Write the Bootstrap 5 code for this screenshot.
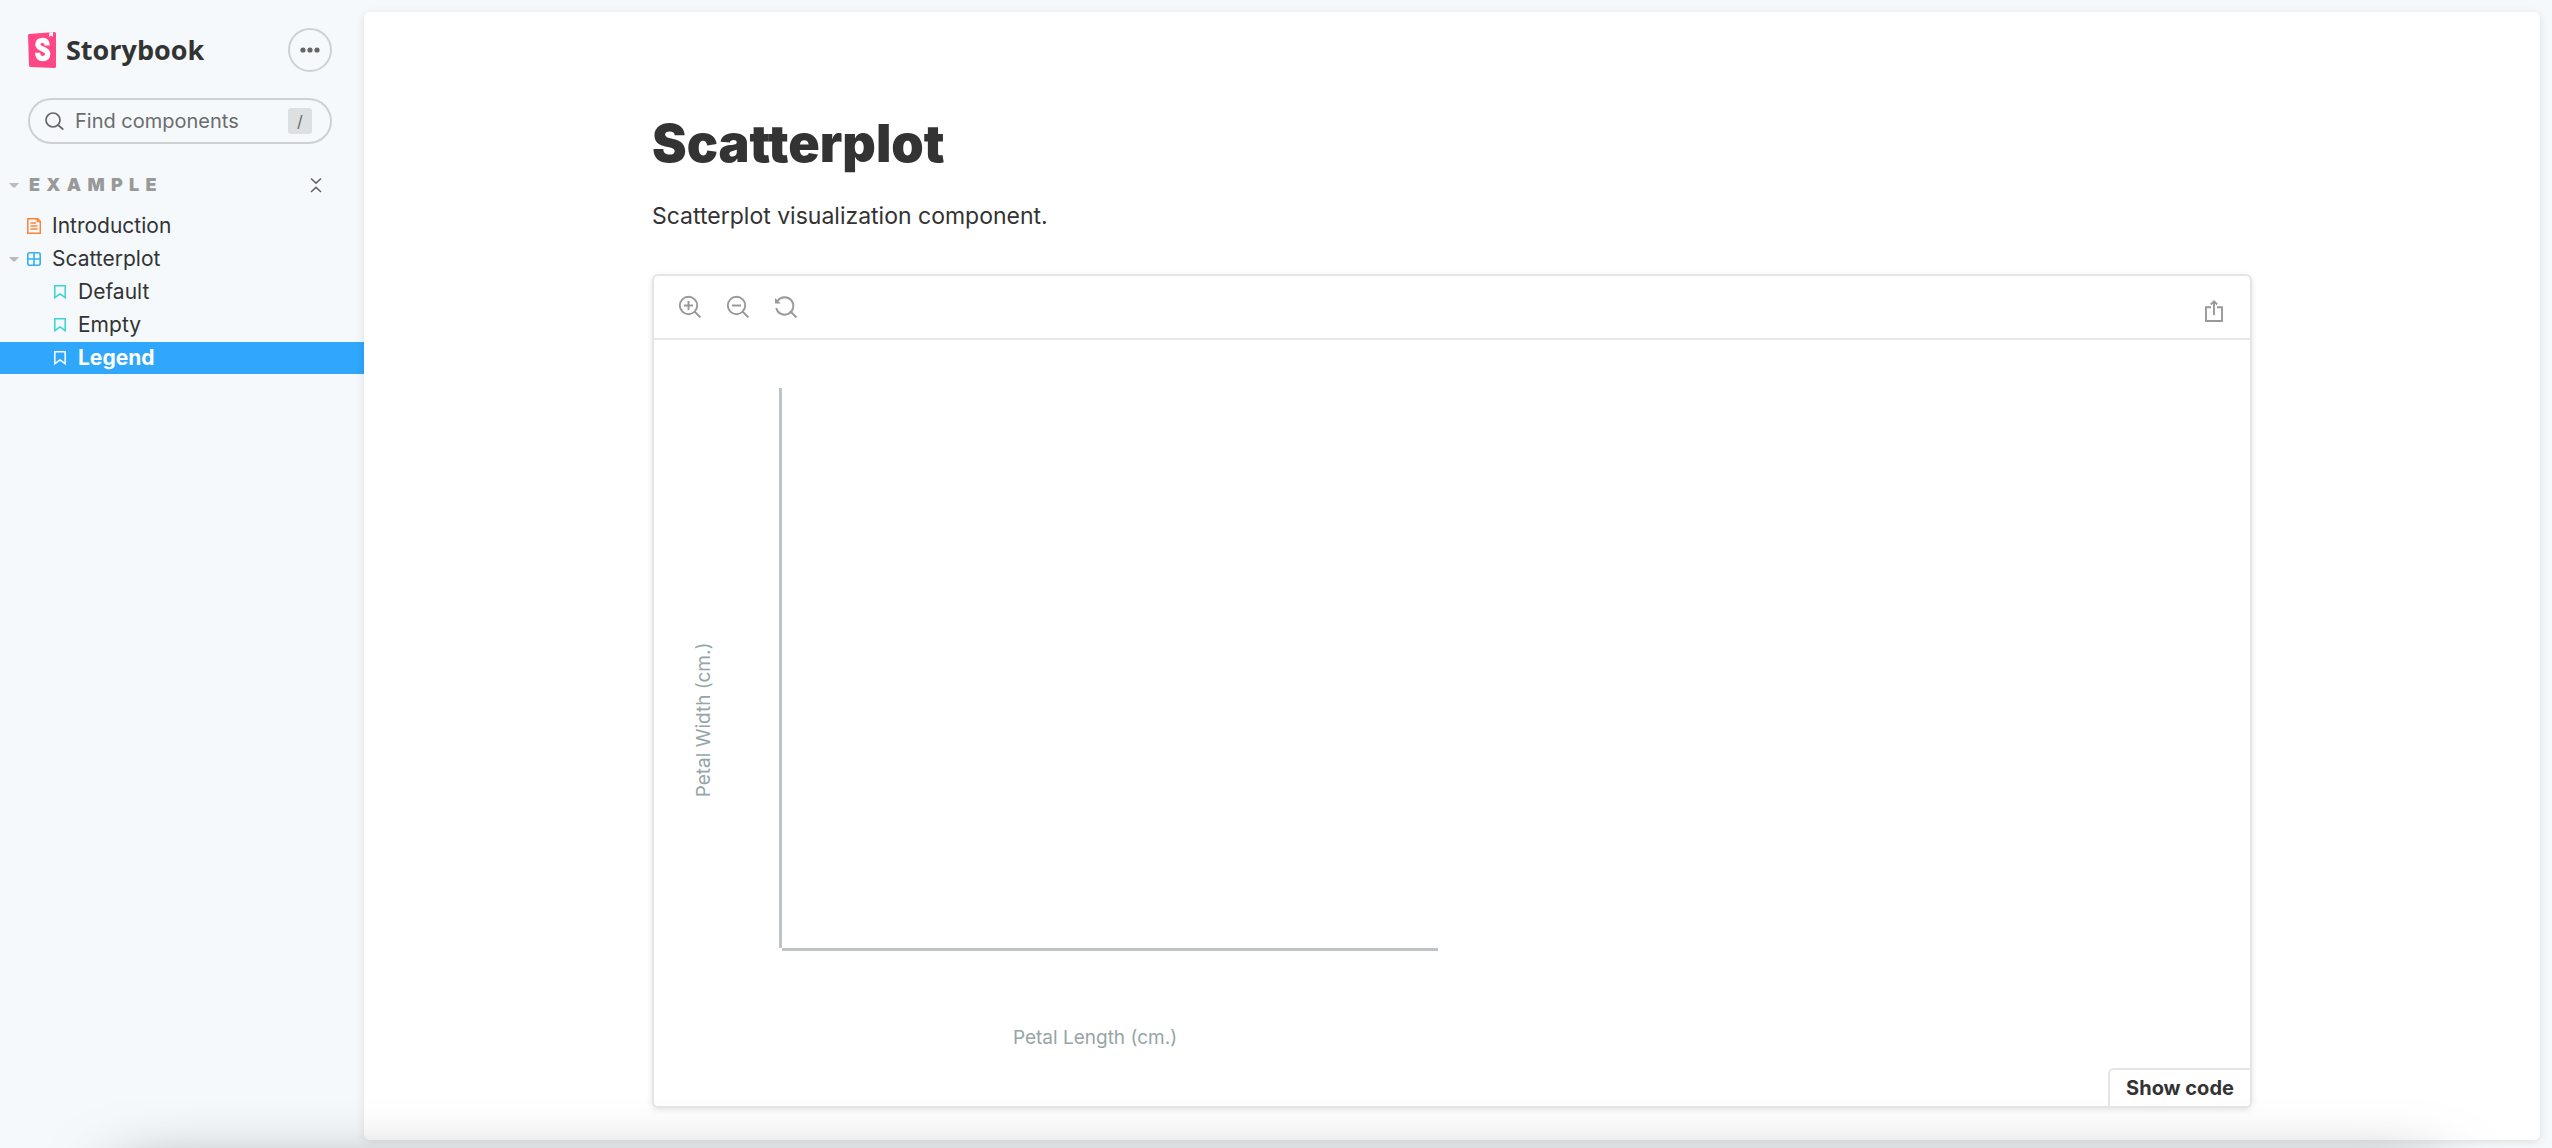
<!DOCTYPE html>
<html lang="en">
<head>
<meta charset="utf-8">
<meta name="viewport" content="width=device-width, initial-scale=1">
<title>Scatterplot - Legend ⋅ Storybook</title>
<link rel="stylesheet" href="https://cdn.jsdelivr.net/npm/bootstrap@5.3.0/dist/css/bootstrap.min.css">
<style>
  body { background: #f5f9fc; color: #333; font-family: Inter, "Liberation Sans", sans-serif; }
  svg { display: block; flex: none; }
  .sb-shell { min-height: 100vh; padding: 12px 12px 8px 0; }
  .sb-shell::after {
    content: ""; position: fixed; top: calc(100vh + 34px); left: 120px; right: 120px; height: 200px;
    box-shadow: 0 0 70px rgba(0, 0, 0, .62); pointer-events: none;
  }
  .sb-side { width: 364px; flex: none; padding-top: 16px; }
  .sb-head { padding: 0 32px 0 28px; height: 44px; }
  .sb-brand { gap: 9px; color: #333; font: 700 27px/36px "Open Sans", sans-serif; }
  .sb-more { width: 44px; height: 44px; border: 2px solid #ced1d4; }
  .sb-find { margin: 26px 32px 0 28px; height: 46px; padding: 0 18px 0 15px; gap: 11px; border: 2px solid #ced0d2; }
  .sb-find input { font-size: 20px; line-height: 24px; color: #666; }
  .sb-find input::placeholder { color: #6b6c6d; opacity: 1; }
  .sb-find kbd { width: 24px; height: 26px; font: 16px/26px Inter, sans-serif; color: #666; background: #dce0e2; border-radius: 3px; }
  .sb-group { margin-top: 28px; height: 26px; padding: 0 42px 0 9px; }
  .sb-group h2 { font-size: 18px; line-height: 26px; font-weight: 900; letter-spacing: .35em; color: #999; padding-left: 10px; }
  .sb-tree { margin-top: 12px; gap: 1px; }
  .sb-item { height: 32px; padding-left: 27px; gap: 11px; font-size: 21px; line-height: 32px; color: #333; }
  .sb-item.is-parent { padding-left: 9px; }
  .sb-item.is-parent .sb-caret { margin-right: -3px; }
  .sb-item.is-story { padding-left: 54px; gap: 12px; }
  .sb-item.active { background: #2ea7fc; color: #fff; font-weight: 700; }
  .sb-main { background: #fff; border-radius: 6px; box-shadow: 0 2px 10px rgba(0, 0, 0, .1); padding: 98px 32px 32px; }
  .sb-doc { max-width: 1600px; }
  .sb-doc h1 { font-size: 52px; line-height: 68px; font-weight: 900; }
  .sb-doc p { font-size: 23px; line-height: 32px; margin: 22px 0 42px; }
  .sb-preview { border: 2px solid #e5e5e5; border-radius: 6px; box-shadow: 0 2px 6px rgba(0, 0, 0, .1); overflow: hidden; }
  .sb-tools { height: 64px; padding: 0 26px 0 24px; gap: 24px; border-bottom: 2px solid #e8e8e8; }
  .sb-tools button { color: #999; }
  .sb-tools .sb-share { padding-top: 8px; }
  .sb-code { position: absolute; right: 0; bottom: 0; width: 142px; height: 38px; border: solid #e5e5e5; border-width: 2px 0 0 2px; border-radius: 6px 0 0 0; background: #fff; color: #333; font-size: 20px; line-height: 34px; font-weight: 700; }
  .sb-chart text { font-size: 19px; fill: #95a5a6; text-anchor: middle; }
  .sb-chart line { stroke: #bdc3c7; stroke-width: 3; }
</style>
<script src="https://cdn.jsdelivr.net/npm/bootstrap@5.3.0/dist/js/bootstrap.bundle.min.js"></script>
</head>
<body>
<div class="sb-shell d-flex">
  <nav class="sb-side" aria-label="Stories">
    <div class="sb-head d-flex align-items-center justify-content-between">
      <a href="#" class="sb-brand d-flex align-items-center text-decoration-none">
        <svg width="29" height="36" viewBox="0 0 29 36"><path fill="#ff4785" d="M0 3.200Q0 2 1.200 1.900L26.400 0Q28 0 28 1.500V34.500Q28 36 26.400 36L2.500 35Q1 34.900 1 33.500Z"/><path fill="#fff" d="M21.300.5 25 .2V5L23.200 3.600 21.100 5Z"/><path fill="none" stroke="#fff" stroke-width="5.200" d="M19.200 13.500C19.200 10 17.900 8.300 14.800 8.300S9.800 9.700 9.800 12.200C9.800 18 19.700 16 19.700 21.800C19.700 25 18 26.600 14.800 26.600S9.600 24.700 9.600 20.800"/></svg>
        <span>Storybook</span>
      </a>
      <button type="button" class="sb-more btn p-0 rounded-circle d-flex align-items-center justify-content-center" aria-label="Shortcuts">
        <svg width="20" height="6" viewBox="0 0 20 6" fill="#666"><circle cx="3" cy="3" r="2.600"/><circle cx="10" cy="3" r="2.600"/><circle cx="17" cy="3" r="2.600"/></svg>
      </button>
    </div>
    <div class="sb-find rounded-pill d-flex align-items-center">
      <label for="find" aria-label="Search"><svg width="19" height="19" viewBox="0 0 19 19" fill="none" stroke="#666" stroke-width="1.700"><circle cx="8" cy="8" r="7"/><path d="m13 13 5.300 4.500"/></svg></label>
      <input id="find" type="text" class="border-0 bg-transparent p-0 flex-grow-1 w-100" placeholder="Find components">
      <kbd class="p-0 text-center flex-shrink-0">/</kbd>
    </div>
    <div class="sb-group d-flex align-items-center">
      <svg width="10" height="5" viewBox="0 0 10 5"><path fill="#bbb" d="M0 0H10L6 4.500H4Z"/></svg>
      <h2 class="mb-0 flex-grow-1">EXAMPLE</h2>
      <button type="button" class="btn p-0 border-0" aria-label="Collapse all"><svg width="12" height="16" viewBox="0 0 12 16" fill="none" stroke="#666" stroke-width="1.600"><path d="m1 1.500 5 4.700 5-4.700M1 15l5-4.700L11 15"/></svg></button>
    </div>
    <div class="sb-tree d-flex flex-column">
      <a href="#" class="sb-item d-flex align-items-center text-decoration-none">
        <svg width="14" height="16" viewBox="0 0 14 16" fill="none" stroke="#ff8333" stroke-width="1.500"><path d="M.8.8H10.800L13.300 3.300V15.200H.8Z"/><path d="M10.500.8V3.500H13.300M3.500 5H9M3.500 8H10.500M3.500 11H10.500"/></svg>
        <span>Introduction</span></a>
      <a href="#" class="sb-item is-parent d-flex align-items-center text-decoration-none">
        <svg class="sb-caret" width="10" height="5" viewBox="0 0 10 5"><path fill="#bbb" d="M0 0H10L6 4.500H4Z"/></svg>
        <svg width="14" height="14" viewBox="0 0 14 14" fill="none" stroke="#37aef5" stroke-width="1.600"><rect x=".8" y=".8" width="12.400" height="12.400" rx="2"/><path d="M7 1V13M1 7H13"/></svg>
        <span>Scatterplot</span></a>
      <a href="#" class="sb-item is-story d-flex align-items-center text-decoration-none">
        <svg width="12" height="14" viewBox="0 0 12 14" fill="none" stroke="#37d5d3" stroke-width="1.500"><path d="M.8.800H11.200V12.700L6 9 .8 12.700Z"/></svg>
        <span>Default</span></a>
      <a href="#" class="sb-item is-story d-flex align-items-center text-decoration-none">
        <svg width="12" height="14" viewBox="0 0 12 14" fill="none" stroke="#37d5d3" stroke-width="1.500"><path d="M.8.800H11.200V12.700L6 9 .8 12.700Z"/></svg>
        <span>Empty</span></a>
      <a href="#" class="sb-item is-story active d-flex align-items-center text-decoration-none" aria-current="page">
        <svg width="12" height="14" viewBox="0 0 12 14" fill="none" stroke="#fff" stroke-width="1.500"><path d="M.8.800H11.200V12.700L6 9 .8 12.700Z"/></svg>
        <span>Legend</span></a>
    </div>
  </nav>
  <main class="sb-main flex-grow-1">
    <div class="sb-doc mx-auto">
      <h1 class="mb-0">Scatterplot</h1>
      <p>Scatterplot visualization component.</p>
      <section class="sb-preview position-relative">
        <div class="sb-tools d-flex align-items-center">
          <button type="button" class="btn p-0 border-0" aria-label="Zoom in"><svg width="24" height="24" viewBox="0 0 24 24" fill="none" stroke="currentColor" stroke-width="1.900"><circle cx="10.500" cy="10.500" r="8.700"/><path d="m16.500 16.500 6 6M6 10.500H15M10.500 6V15"/></svg></button>
          <button type="button" class="btn p-0 border-0" aria-label="Zoom out"><svg width="24" height="24" viewBox="0 0 24 24" fill="none" stroke="currentColor" stroke-width="1.900"><circle cx="10.500" cy="10.500" r="8.700"/><path d="m16.500 16.500 6 6M6 10.500H15"/></svg></button>
          <button type="button" class="btn p-0 border-0" aria-label="Reset zoom"><svg width="24" height="24" viewBox="0 0 24 24" fill="none" stroke="currentColor" stroke-width="1.900"><path d="M3.500 6A8.700 8.700 0 1 1 2.200 13M16.500 16.500l6 6"/><path fill="currentColor" stroke="none" d="M1 3V8.500H6.800Z"/></svg></button>
          <button type="button" class="sb-share btn pb-0 px-0 border-0 ms-auto" aria-label="Open canvas in new tab"><svg width="20" height="24" viewBox="0 0 20 24" fill="none" stroke="currentColor" stroke-width="1.900"><path d="M7 8.200H2V22H18V8.200H13M10 16V2.500M6.800 5.500 10 2.300l3.200 3.200"/></svg></button>
        </div>
        <svg class="sb-chart" width="820" height="766" viewBox="0 0 820 766" role="img" aria-label="Empty scatterplot">
          <line x1="126.500" y1="48" x2="126.500" y2="608"/>
          <line x1="128" y1="609.500" x2="784" y2="609.500"/>
          <text x="441" y="704">Petal Length (cm.)</text>
          <text transform="translate(56 380) rotate(-90)">Petal Width (cm.)</text>
        </svg>
        <button type="button" class="sb-code btn p-0">Show code</button>
      </section>
    </div>
  </main>
</div>
</body>
</html>
